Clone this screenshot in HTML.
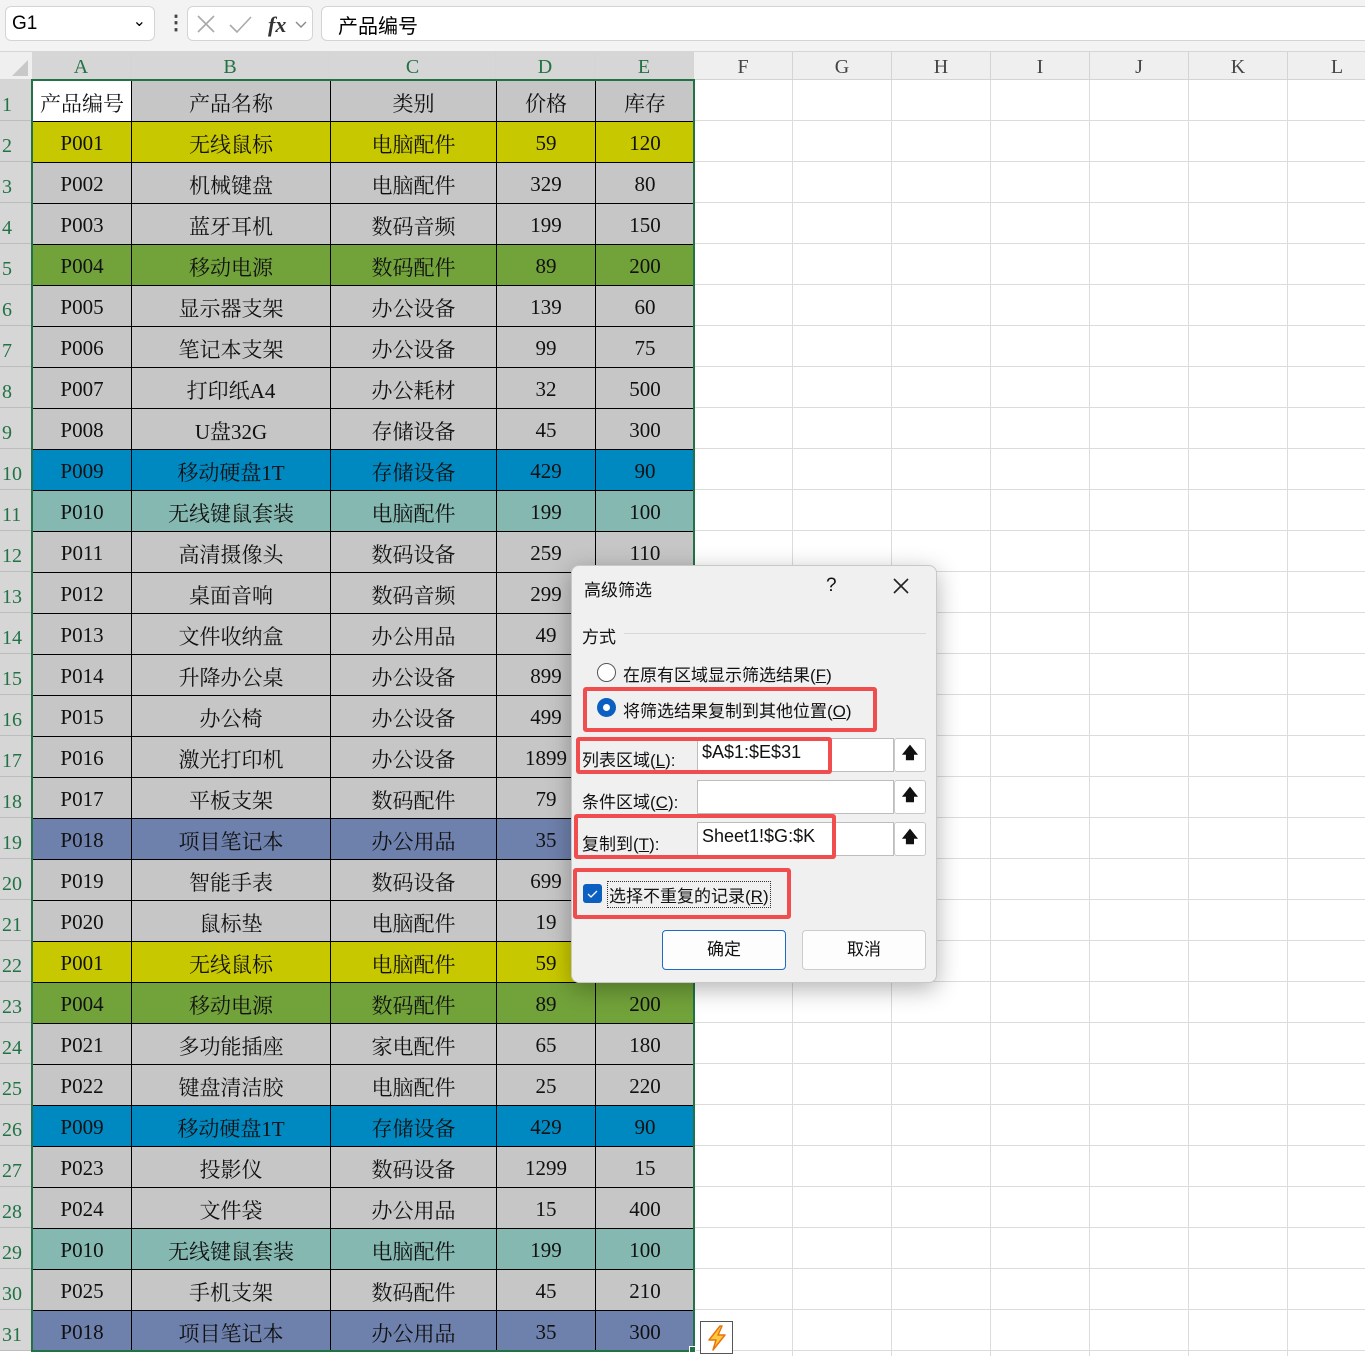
<!DOCTYPE html>
<html><head><meta charset="utf-8"><style>
*{box-sizing:border-box;margin:0;padding:0}
body{width:1365px;height:1356px;overflow:hidden;background:#fff;position:relative;font-family:"Liberation Serif","Noto Serif CJK SC",serif}
.abs{position:absolute}
#top{left:0;top:0;width:1365px;height:52px;background:#f3f3f3;border-bottom:1px solid #d6d6d6}
.box{position:absolute;background:#fff;border:1px solid #d4d4d4;border-radius:6px}
#hdr{left:0;top:52px;width:1365px;height:28px;background:#efefef;border-bottom:1px solid #d4d4d4}
.ch{position:absolute;top:52px;height:28px;line-height:30px;text-align:center;font-size:20px;color:#444;border-right:1px solid #d4d4d4}
.ch.s{background:#d6d6d6;color:#217346}
.rh{position:absolute;left:0;width:32px;height:41px;background:#d6d6d6;color:#217346;font-size:20px;padding-top:14px;padding-left:2px;border-bottom:1px solid #bdbdbd}
#grid{left:694px;top:80px;width:671px;height:1276px;background-image:linear-gradient(#dcdcdc 1px,transparent 1px),linear-gradient(90deg,#dcdcdc 1px,transparent 1px);background-size:99px 41px,99px 41px;background-position:0 40px,98px 0}
table{position:absolute;left:32px;top:80px;border-collapse:collapse;table-layout:fixed}
td{height:41px;border:1px solid #000;text-align:center;font-size:21px;color:#111;padding-top:3px;background:#c6c6c6}
tr.y td{background:#c8c800}tr.g td{background:#72a23a}tr.b td{background:#0088c0}tr.t td{background:#84b8b0}tr.p td{background:#6e80ac}
#dlg{left:571px;top:565px;width:366px;height:418px;background:#f0f0f0;border:1px solid #c8c8c8;border-radius:8px;box-shadow:0 6px 24px rgba(0,0,0,.3);font-family:"Liberation Sans","Noto Sans CJK SC",sans-serif;font-size:17px;color:#111}
#dlg .abs{white-space:nowrap}
.red{position:absolute;border:4px solid #f04e4e;border-radius:3px}
.inp{position:absolute;background:#fff;border:1px solid #bdbdbd;height:34px}
.btn2{position:absolute;width:32px;height:34px;background:#fff;border:1px solid #c8c8c8;border-radius:3px;text-align:center;font-size:16px;line-height:30px;font-weight:bold}
.u{text-decoration:underline}
.b3{position:absolute;top:364px;width:124px;height:40px;background:#fdfdfd;border:1px solid #ccc;border-radius:4px;text-align:center;line-height:38px}
</style></head><body>
<div id="top" class="abs"></div>
<div class="box" style="left:5px;top:6px;width:150px;height:35px;font-family:'Liberation Sans',sans-serif;font-size:19px;padding:6px 0 0 6px">G1<span style="position:absolute;right:8px;top:4px;font-size:16px">&#8964;</span></div>
<div class="abs" style="left:166px;top:10px;font-size:20px;font-weight:bold;color:#444">&#8942;</div>
<div class="box" style="left:187px;top:6px;width:126px;height:35px">
<svg width="126" height="35" style="position:absolute;left:0;top:0"><path d="M10 9l16 16M26 9L10 25" stroke="#aaa" stroke-width="1.6" fill="none"/><path d="M42 18l7 7 14-15" stroke="#aaa" stroke-width="1.6" fill="none"/><text x="80" y="25" font-family="Liberation Serif" font-style="italic" font-weight="bold" font-size="22" fill="#333">fx</text><path d="M108 15l5 5 5-5" stroke="#888" stroke-width="1.4" fill="none"/></svg></div>
<div class="box" style="left:321px;top:6px;width:1060px;height:35px;font-family:'Liberation Sans','Noto Sans CJK SC',sans-serif;font-size:20px;padding:3px 0 0 16px">产品编号</div>
<div id="hdr" class="abs"></div>
<svg class="abs" style="left:8px;top:58px" width="22" height="20"><path d="M20 2V18H4Z" fill="#c8c8c8"/></svg>
<div class="ch s" style="left:32px;width:99px">A</div><div class="ch s" style="left:131px;width:199px">B</div><div class="ch s" style="left:330px;width:166px">C</div><div class="ch s" style="left:496px;width:99px">D</div><div class="ch s" style="left:595px;width:99px">E</div>
<div class="ch" style="left:694px;width:99px">F</div><div class="ch" style="left:793px;width:99px">G</div><div class="ch" style="left:892px;width:99px">H</div><div class="ch" style="left:991px;width:99px">I</div><div class="ch" style="left:1090px;width:99px">J</div><div class="ch" style="left:1189px;width:99px">K</div><div class="ch" style="left:1288px;width:99px">L</div>
<div id="grid" class="abs"></div>
<div class="rh" style="top:80px">1</div><div class="rh" style="top:121px">2</div><div class="rh" style="top:162px">3</div><div class="rh" style="top:203px">4</div><div class="rh" style="top:244px">5</div><div class="rh" style="top:285px">6</div><div class="rh" style="top:326px">7</div><div class="rh" style="top:367px">8</div><div class="rh" style="top:408px">9</div><div class="rh" style="top:449px">10</div><div class="rh" style="top:490px">11</div><div class="rh" style="top:531px">12</div><div class="rh" style="top:572px">13</div><div class="rh" style="top:613px">14</div><div class="rh" style="top:654px">15</div><div class="rh" style="top:695px">16</div><div class="rh" style="top:736px">17</div><div class="rh" style="top:777px">18</div><div class="rh" style="top:818px">19</div><div class="rh" style="top:859px">20</div><div class="rh" style="top:900px">21</div><div class="rh" style="top:941px">22</div><div class="rh" style="top:982px">23</div><div class="rh" style="top:1023px">24</div><div class="rh" style="top:1064px">25</div><div class="rh" style="top:1105px">26</div><div class="rh" style="top:1146px">27</div><div class="rh" style="top:1187px">28</div><div class="rh" style="top:1228px">29</div><div class="rh" style="top:1269px">30</div><div class="rh" style="top:1310px">31</div>
<table>
<colgroup><col style="width:99px"><col style="width:199px"><col style="width:166px"><col style="width:99px"><col style="width:99px"></colgroup>
<tr><td style="background:#fff">产品编号</td><td>产品名称</td><td>类别</td><td>价格</td><td>库存</td></tr>
<tr class="y"><td>P001</td><td>无线鼠标</td><td>电脑配件</td><td>59</td><td>120</td></tr>
<tr><td>P002</td><td>机械键盘</td><td>电脑配件</td><td>329</td><td>80</td></tr>
<tr><td>P003</td><td>蓝牙耳机</td><td>数码音频</td><td>199</td><td>150</td></tr>
<tr class="g"><td>P004</td><td>移动电源</td><td>数码配件</td><td>89</td><td>200</td></tr>
<tr><td>P005</td><td>显示器支架</td><td>办公设备</td><td>139</td><td>60</td></tr>
<tr><td>P006</td><td>笔记本支架</td><td>办公设备</td><td>99</td><td>75</td></tr>
<tr><td>P007</td><td>打印纸A4</td><td>办公耗材</td><td>32</td><td>500</td></tr>
<tr><td>P008</td><td>U盘32G</td><td>存储设备</td><td>45</td><td>300</td></tr>
<tr class="b"><td>P009</td><td>移动硬盘1T</td><td>存储设备</td><td>429</td><td>90</td></tr>
<tr class="t"><td>P010</td><td>无线键鼠套装</td><td>电脑配件</td><td>199</td><td>100</td></tr>
<tr><td>P011</td><td>高清摄像头</td><td>数码设备</td><td>259</td><td>110</td></tr>
<tr><td>P012</td><td>桌面音响</td><td>数码音频</td><td>299</td><td>85</td></tr>
<tr><td>P013</td><td>文件收纳盒</td><td>办公用品</td><td>49</td><td>250</td></tr>
<tr><td>P014</td><td>升降办公桌</td><td>办公设备</td><td>899</td><td>20</td></tr>
<tr><td>P015</td><td>办公椅</td><td>办公设备</td><td>499</td><td>40</td></tr>
<tr><td>P016</td><td>激光打印机</td><td>办公设备</td><td>1899</td><td>15</td></tr>
<tr><td>P017</td><td>平板支架</td><td>数码配件</td><td>79</td><td>180</td></tr>
<tr class="p"><td>P018</td><td>项目笔记本</td><td>办公用品</td><td>35</td><td>300</td></tr>
<tr><td>P019</td><td>智能手表</td><td>数码设备</td><td>699</td><td>50</td></tr>
<tr><td>P020</td><td>鼠标垫</td><td>电脑配件</td><td>19</td><td>400</td></tr>
<tr class="y"><td>P001</td><td>无线鼠标</td><td>电脑配件</td><td>59</td><td>120</td></tr>
<tr class="g"><td>P004</td><td>移动电源</td><td>数码配件</td><td>89</td><td>200</td></tr>
<tr><td>P021</td><td>多功能插座</td><td>家电配件</td><td>65</td><td>180</td></tr>
<tr><td>P022</td><td>键盘清洁胶</td><td>电脑配件</td><td>25</td><td>220</td></tr>
<tr class="b"><td>P009</td><td>移动硬盘1T</td><td>存储设备</td><td>429</td><td>90</td></tr>
<tr><td>P023</td><td>投影仪</td><td>数码设备</td><td>1299</td><td>15</td></tr>
<tr><td>P024</td><td>文件袋</td><td>办公用品</td><td>15</td><td>400</td></tr>
<tr class="t"><td>P010</td><td>无线键鼠套装</td><td>电脑配件</td><td>199</td><td>100</td></tr>
<tr><td>P025</td><td>手机支架</td><td>数码配件</td><td>45</td><td>210</td></tr>
<tr class="p"><td>P018</td><td>项目笔记本</td><td>办公用品</td><td>35</td><td>300</td></tr>
</table>
<div class="abs" style="left:31px;top:79px;width:664px;height:1273px;border:2px solid #217346"></div>
<div class="abs" style="left:689px;top:1346px;width:7px;height:7px;background:#217346;border:1px solid #fff"></div>
<div class="abs" style="left:700px;top:1321px;width:33px;height:33px;border:1px solid #555;background:#fff">
<svg width="31" height="31"><path d="M19 4L8 18h7l-3 10 12-15h-7l4-9z" fill="#ffc83d" stroke="#e8740c" stroke-width="1.5" stroke-linejoin="round"/></svg></div>

<div id="dlg" class="abs">
<div class="abs" style="left:12px;top:10px">高级筛选</div>
<div class="abs" style="left:254px;top:9px;font-size:19px">?</div>
<svg class="abs" style="left:320px;top:11px" width="18" height="18"><path d="M2 2l14 14M16 2L2 16" stroke="#222" stroke-width="1.6"/></svg>
<div class="abs" style="left:10px;top:57px">方式</div>
<div class="abs" style="left:52px;top:67px;width:302px;height:1px;background:#d8d8d8"></div>
<div class="abs" style="left:25px;top:97px;width:19px;height:19px;border:1px solid #555;border-radius:50%;background:#fff"></div>
<div class="abs" style="left:51px;top:95px">在原有区域显示筛选结果(<span class="u">F</span>)</div>
<div class="red" style="left:11px;top:121px;width:294px;height:45px"></div>
<div class="abs" style="left:25px;top:132px;width:19px;height:19px;border-radius:50%;background:#0a5fc0"><div style="margin:6px;width:7px;height:7px;border-radius:50%;background:#fff"></div></div>
<div class="abs" style="left:51px;top:131px">将筛选结果复制到其他位置(<span class="u">O</span>)</div>
<div class="inp" style="left:125px;top:172px;width:197px"></div><div class="btn2" style="left:322px;top:172px">&#129093;</div>
<div class="abs" style="left:10px;top:180px">列表区域(<span class="u">L</span>):</div>
<div class="abs" style="left:130px;top:176px;font-size:18px">$A$1:$E$31</div>
<div class="red" style="left:4px;top:171px;width:256px;height:37px"></div>
<div class="inp" style="left:125px;top:214px;width:197px"></div><div class="btn2" style="left:322px;top:214px">&#129093;</div>
<div class="abs" style="left:10px;top:222px">条件区域(<span class="u">C</span>):</div>
<div class="inp" style="left:125px;top:256px;width:197px"></div><div class="btn2" style="left:322px;top:256px">&#129093;</div>
<div class="abs" style="left:10px;top:264px">复制到(<span class="u">T</span>):</div>
<div class="abs" style="left:130px;top:260px;font-size:18px">Sheet1!$G:$K</div>
<div class="red" style="left:2px;top:248px;width:262px;height:45px"></div>
<div class="red" style="left:1px;top:302px;width:218px;height:51px"></div>
<div class="abs" style="left:11px;top:318px;width:19px;height:19px;border-radius:3px;background:#0a5fc0"><svg width="19" height="19"><path d="M5 10l3 3 6-6" stroke="#fff" stroke-width="1.3" fill="none"/></svg></div>
<div class="abs" style="left:35px;top:315px;border:1px dotted #333;padding:0 1px">选择不重复的记录(<span class="u">R</span>)</div>
<div class="b3" style="left:90px;border-color:#1f6bc4">确定</div>
<div class="b3" style="left:230px">取消</div>
</div>
</body></html>
